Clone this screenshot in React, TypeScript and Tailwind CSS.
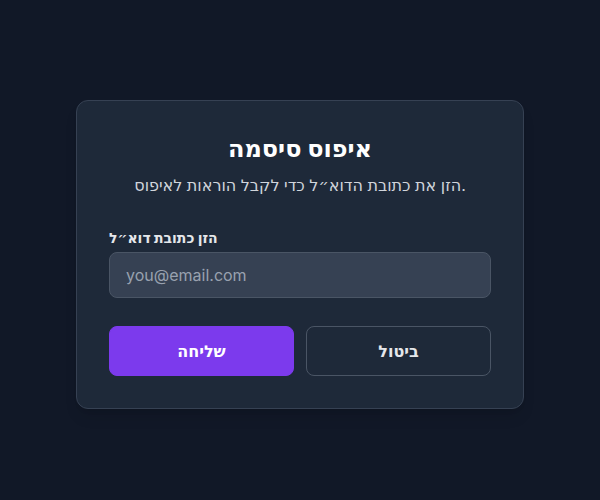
import { useState } from "react";

export default function App() {
  const [email, setEmail] = useState("");

  return (
    <div className="min-h-screen w-full bg-[#111827] flex items-center justify-center font-['Inter','DejaVu_Sans',sans-serif]">
      <div className="w-[448px] mt-[8px] rounded-xl border border-gray-700 bg-gray-800 p-8 shadow-lg">
        <div className="text-center">
          <h1 className="text-2xl font-bold text-white">איפוס סיסמה</h1>
          <p className="mt-2 text-base text-gray-300">
            הזן את כתובת הדוא״ל כדי לקבל הוראות לאיפוס.
          </p>
        </div>

        <div className="mt-[31px]">
          <label className="block mb-1 text-sm font-bold text-gray-200">
            הזן כתובת דוא״ל
          </label>
          <input
            type="email"
            value={email}
            onChange={(e) => setEmail(e.target.value)}
            placeholder="you@email.com"
            className="w-full rounded-lg border border-gray-600 bg-gray-700 px-4 py-2.5 text-base text-white placeholder-gray-400 outline-none"
          />
        </div>

        <div className="mt-7 flex gap-3">
          <button className="flex-1 rounded-lg border border-[#7c3aed] bg-[#7c3aed] py-3 text-base font-bold text-white">
            שליחה
          </button>
          <button className="flex-1 rounded-lg border border-gray-600 bg-transparent py-3 text-base font-bold text-gray-200">
            ביטול
          </button>
        </div>
      </div>
    </div>
  );
}
